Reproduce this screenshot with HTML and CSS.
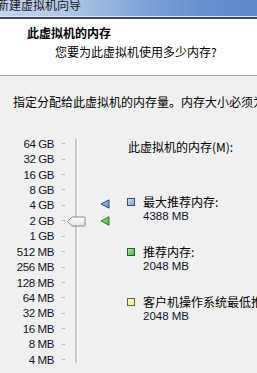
FILE: index.html
```html
<!DOCTYPE html>
<html lang="zh-CN">
<head>
    <meta charset="UTF-8">
    <meta name="viewport" content="width=device-width, initial-scale=1.0">
    <title>新建虚拟机向导</title>
    <link rel="stylesheet" href="styles.css">
</head>
<body>
    <div class="titlebar">
        <span class="title">新建虚拟机向导</span>
    </div>
    <div class="titlebar-edge"></div>

    <div class="header">
        <h1>此虚拟机的内存</h1>
        <h2>您要为此虚拟机使用多少内存?</h2>
    </div>

    <div class="content">
        <p class="intro">指定分配给此虚拟机的内存量。内存大小必须为 4 MB 的倍数。</p>

        <div class="memory">
            <div class="scale">
                <div class="rows">
                    <div class="row"><span class="label">64 GB</span><span class="tick"></span></div>
                    <div class="row"><span class="label">32 GB</span><span class="tick"></span></div>
                    <div class="row"><span class="label">16 GB</span><span class="tick"></span></div>
                    <div class="row"><span class="label">8 GB</span><span class="tick"></span></div>
                    <div class="row"><span class="label">4 GB</span><span class="tick"></span></div>
                    <div class="row"><span class="label">2 GB</span><span class="tick"></span></div>
                    <div class="row"><span class="label">1 GB</span><span class="tick"></span></div>
                    <div class="row"><span class="label">512 MB</span><span class="tick"></span></div>
                    <div class="row"><span class="label">256 MB</span><span class="tick"></span></div>
                    <div class="row"><span class="label">128 MB</span><span class="tick"></span></div>
                    <div class="row"><span class="label">64 MB</span><span class="tick"></span></div>
                    <div class="row"><span class="label">32 MB</span><span class="tick"></span></div>
                    <div class="row"><span class="label">16 MB</span><span class="tick"></span></div>
                    <div class="row"><span class="label">8 MB</span><span class="tick"></span></div>
                    <div class="row"><span class="label">4 MB</span><span class="tick"></span></div>
                </div>
                <div class="track"></div>

                <!-- slider thumb -->
                <svg class="thumb" width="19" height="11" viewBox="0 0 19 11">
                    <defs>
                        <linearGradient id="thumbFill" x1="0" y1="0" x2="0" y2="1">
                            <stop offset="0" stop-color="#ffffff"/>
                            <stop offset="1" stop-color="#e2e2e2"/>
                        </linearGradient>
                    </defs>
                    <path d="M0.5 5.5 L5 1 L17 1 Q18 1 18 2 L18 9 Q18 10 17 10 L5 10 Z" fill="url(#thumbFill)" stroke="#8a8a8a"/>
                </svg>

                <!-- markers -->
                <svg class="marker marker-max" width="10" height="10" viewBox="0 0 10 10">
                    <defs>
                        <linearGradient id="blueFill" x1="0" y1="0" x2="1" y2="1">
                            <stop offset="0" stop-color="#c6d8f2"/>
                            <stop offset="1" stop-color="#4f7fc4"/>
                        </linearGradient>
                    </defs>
                    <path d="M1 5 L9 0.8 L9 9.2 Z" fill="url(#blueFill)" stroke="#2f4f86" stroke-linejoin="round"/>
                </svg>
                <svg class="marker marker-rec" width="10" height="10" viewBox="0 0 10 10">
                    <defs>
                        <linearGradient id="greenFill" x1="0" y1="0" x2="1" y2="1">
                            <stop offset="0" stop-color="#c8f0b4"/>
                            <stop offset="1" stop-color="#2fb02a"/>
                        </linearGradient>
                    </defs>
                    <path d="M1 5 L9 0.8 L9 9.2 Z" fill="url(#greenFill)" stroke="#2a7a22" stroke-linejoin="round"/>
                </svg>
            </div>

            <div class="info">
                <div class="info-title">此虚拟机的内存(M):</div>

                <div class="item item-first">
                    <span class="swatch swatch-blue"></span>
                    <div class="item-text">
                        <div>最大推荐内存:</div>
                        <div class="value">4388 MB</div>
                    </div>
                </div>

                <div class="item">
                    <span class="swatch swatch-green"></span>
                    <div class="item-text">
                        <div>推荐内存:</div>
                        <div class="value">2048 MB</div>
                    </div>
                </div>

                <div class="item">
                    <span class="swatch swatch-yellow"></span>
                    <div class="item-text">
                        <div>客户机操作系统最低推荐内存:</div>
                        <div class="value">2048 MB</div>
                    </div>
                </div>
            </div>
        </div>
    </div>
</body>
</html>
```

FILE: styles.css
```css
* {
    box-sizing: border-box;
    margin: 0;
    padding: 0;
}

body {
    width: 257px;
    height: 373px;
    overflow: hidden;
    background: #f0f0f0;
    font-family: "Noto Sans CJK SC", "Liberation Sans", sans-serif;
    font-size: 12px;
    color: #111;
}

.titlebar {
    height: 17px;
    overflow: hidden;
    white-space: nowrap;
    background: linear-gradient(90deg, #c2d5ec 0%, #b2c9e7 25%, #7ea4d8 55%, #6390d0 80%, #5b89cc 100%);
    border-bottom: 1px solid #d6e2f3;
}

.title {
    display: block;
    margin-top: -3px;
    margin-left: -3px;
    line-height: 16px;
    font-size: 12px;
    color: #1a1a1a;
}

.titlebar-edge {
    height: 2px;
    background: #3f4a58;
}

.header {
    height: 57px;
    background: #fff;
    border-bottom: 1px solid #a0a0a0;
    padding-top: 6px;
}

.header h1 {
    margin-left: 27px;
    font-size: 12px;
    line-height: 16px;
    font-weight: bold;
    color: #000;
}

.header h2 {
    margin-top: 3px;
    margin-left: 55px;
    font-size: 12px;
    line-height: 16px;
    font-weight: normal;
    color: #000;
}

.content {
    padding-top: 18px;
}

.intro {
    margin-left: 13px;
    line-height: 16px;
    white-space: nowrap;
    color: #000;
}

.memory {
    display: flex;
    margin-top: 26px;
}

.scale {
    position: relative;
    display: flex;
    width: 128px;
    flex-shrink: 0;
}

.rows {
    display: flex;
    flex-direction: column;
}

.row {
    display: flex;
    align-items: center;
    height: 15.43px;
}

.label {
    width: 54px;
    text-align: right;
    font-family: "Liberation Sans", sans-serif;
    font-size: 11.5px;
    letter-spacing: -0.4px;
    color: #10162a;
}

.tick {
    width: 3px;
    height: 1px;
    margin-left: 8px;
    background: #b4b4b4;
}

.track {
    width: 3px;
    margin-left: 10px;
    margin-top: 3px;
    margin-bottom: 4px;
    background: #c6c6c6;
    border-right: 1px solid #fff;
}

.thumb {
    position: absolute;
    left: 67px;
    top: 80px;
}

.marker {
    position: absolute;
    left: 100px;
}

.marker-max {
    top: 63px;
}

.marker-rec {
    top: 80px;
}

.info {
    white-space: nowrap;
}

.info-title {
    margin-top: 3px;
    line-height: 15px;
    color: #000;
}

.item {
    display: flex;
    margin-top: 20px;
}

.item-first {
    margin-top: 40px;
}

.item-text {
    margin-left: 8px;
    line-height: 15px;
    color: #000;
}

.value {
    font-family: "Liberation Sans", sans-serif;
    font-size: 11.5px;
    color: #10162a;
}

.swatch {
    width: 8px;
    height: 8px;
    margin-top: 4px;
    margin-left: -1px;
    border: 1px solid #3b4f75;
}

.swatch-blue {
    background: linear-gradient(135deg, #d0def2, #7f9fd0);
}

.swatch-green {
    background: linear-gradient(135deg, #b8ecae, #3cb83a);
    border-color: #23651e;
}

.swatch-yellow {
    background: linear-gradient(135deg, #ffffd0, #f2ee66);
    border-color: #6b6a3a;
}
```
